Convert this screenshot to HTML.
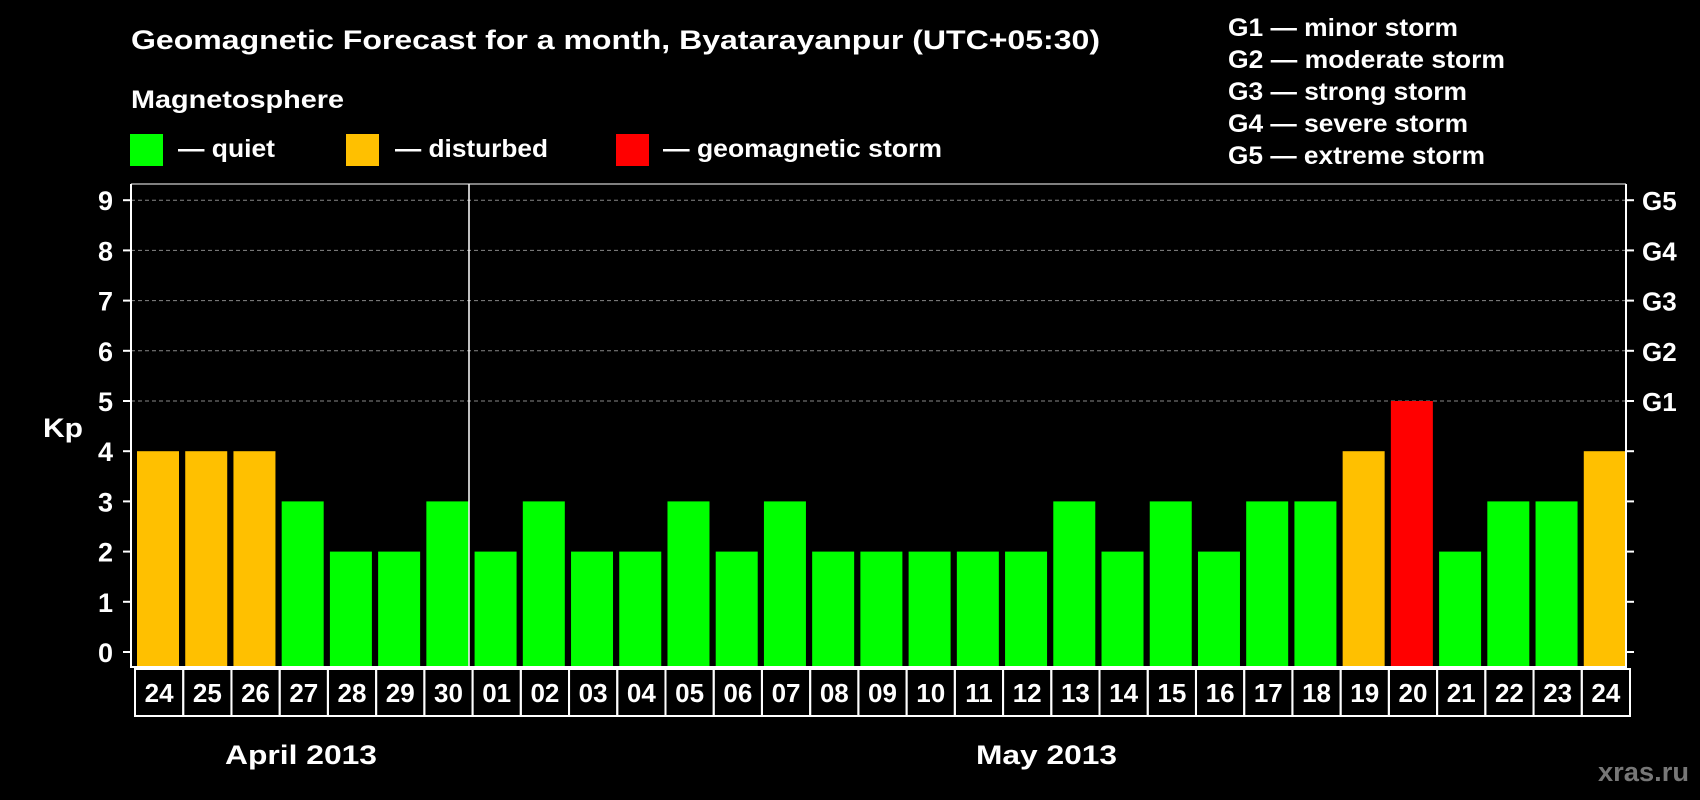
<!DOCTYPE html>
<html><head><meta charset="utf-8"><style>
html,body{margin:0;padding:0;background:#000;width:1700px;height:800px;overflow:hidden}
svg{display:block}
text{font-family:"Liberation Sans",Arial,sans-serif;font-weight:bold;fill:#fff}
</style></head><body>
<svg width="1700" height="800" viewBox="0 0 1700 800" xmlns="http://www.w3.org/2000/svg">
<rect width="1700" height="800" fill="#000"/>
<text x="131" y="49" font-size="27" textLength="969" lengthAdjust="spacingAndGlyphs">Geomagnetic Forecast for a month, Byatarayanpur (UTC+05:30)</text>
<text x="131" y="108" font-size="25" textLength="213" lengthAdjust="spacingAndGlyphs">Magnetosphere</text>
<rect x="130" y="134" width="33" height="32" fill="#00ff00"/>
<text x="178" y="157" font-size="25" textLength="97" lengthAdjust="spacingAndGlyphs">— quiet</text>
<rect x="346" y="134" width="33" height="32" fill="#ffc000"/>
<text x="395" y="157" font-size="25" textLength="153" lengthAdjust="spacingAndGlyphs">— disturbed</text>
<rect x="616" y="134" width="33" height="32" fill="#ff0000"/>
<text x="663" y="157" font-size="25" textLength="279" lengthAdjust="spacingAndGlyphs">— geomagnetic storm</text>
<g font-size="25">
<text x="1228" y="36" textLength="230" lengthAdjust="spacingAndGlyphs">G1 — minor storm</text>
<text x="1228" y="68" textLength="277" lengthAdjust="spacingAndGlyphs">G2 — moderate storm</text>
<text x="1228" y="100" textLength="239" lengthAdjust="spacingAndGlyphs">G3 — strong storm</text>
<text x="1228" y="132" textLength="240" lengthAdjust="spacingAndGlyphs">G4 — severe storm</text>
<text x="1228" y="164" textLength="257" lengthAdjust="spacingAndGlyphs">G5 — extreme storm</text>
</g>
<g id="chart"></g>
<text x="43" y="437" font-size="27" textLength="40" lengthAdjust="spacingAndGlyphs">Kp</text>
<text x="225" y="764" font-size="27" textLength="152" lengthAdjust="spacingAndGlyphs">April 2013</text>
<text x="976" y="764" font-size="27" textLength="141" lengthAdjust="spacingAndGlyphs">May 2013</text>
<text x="1598" y="781" font-size="27" textLength="91" lengthAdjust="spacingAndGlyphs" style="fill:#777">xras.ru</text>
</svg>
<script>
const g=document.getElementById('chart');const NS='http://www.w3.org/2000/svg';
function el(t,a,txt){const e=document.createElementNS(NS,t);for(const k in a)e.setAttribute(k,a[k]);if(txt!==undefined)e.textContent=txt;g.appendChild(e);return e;}
const L=131,R=1626,T=184,B=667;const y=k=>652-50.2*k;
for(let k=5;k<=9;k++)el('line',{x1:L,x2:R,y1:y(k),y2:y(k),stroke:'#888','stroke-dasharray':'4,3','stroke-width':1});
const v=[4,4,4,3,2,2,3,2,3,2,2,3,2,3,2,2,2,2,2,3,2,3,2,3,3,4,5,2,3,3,4];
const d=['24','25','26','27','28','29','30','01','02','03','04','05','06','07','08','09','10','11','12','13','14','15','16','17','18','19','20','21','22','23','24'];
const s=(R-L)/31;
v.forEach((k,i)=>{const c=k>=5?'#ff0000':k==4?'#ffc000':'#00ff00';
el('rect',{x:L+i*s+6,y:y(k),width:42,height:B-y(k),fill:c});
el('rect',{x:135+i*s,y:669,width:s,height:47,fill:'none',stroke:'#fff','stroke-width':2});
el('text',{x:135+i*s+s/2,y:702,'font-size':26,'text-anchor':'middle'},d[i]);});
el('line',{x1:469,x2:469,y1:T,y2:B,stroke:'#fff','stroke-width':1.5});
el('polyline',{points:`${L},${T} ${L},${B} ${R},${B} ${R},${T}`,fill:'none',stroke:'#fff','stroke-width':2});
el('line',{x1:L,x2:R,y1:T,y2:T,stroke:'#fff','stroke-width':1});
for(let k=0;k<=9;k++){el('line',{x1:L-8,x2:L,y1:y(k),y2:y(k),stroke:'#fff','stroke-width':2});
el('line',{x1:R,x2:R+8,y1:y(k),y2:y(k),stroke:'#fff','stroke-width':2});
el('text',{x:113,y:y(k)+10,'font-size':27,'text-anchor':'end'},k);}
['G1','G2','G3','G4','G5'].forEach((t,i)=>el('text',{x:1642,y:y(5+i)+10,'font-size':26},t));
</script>
</body></html>
